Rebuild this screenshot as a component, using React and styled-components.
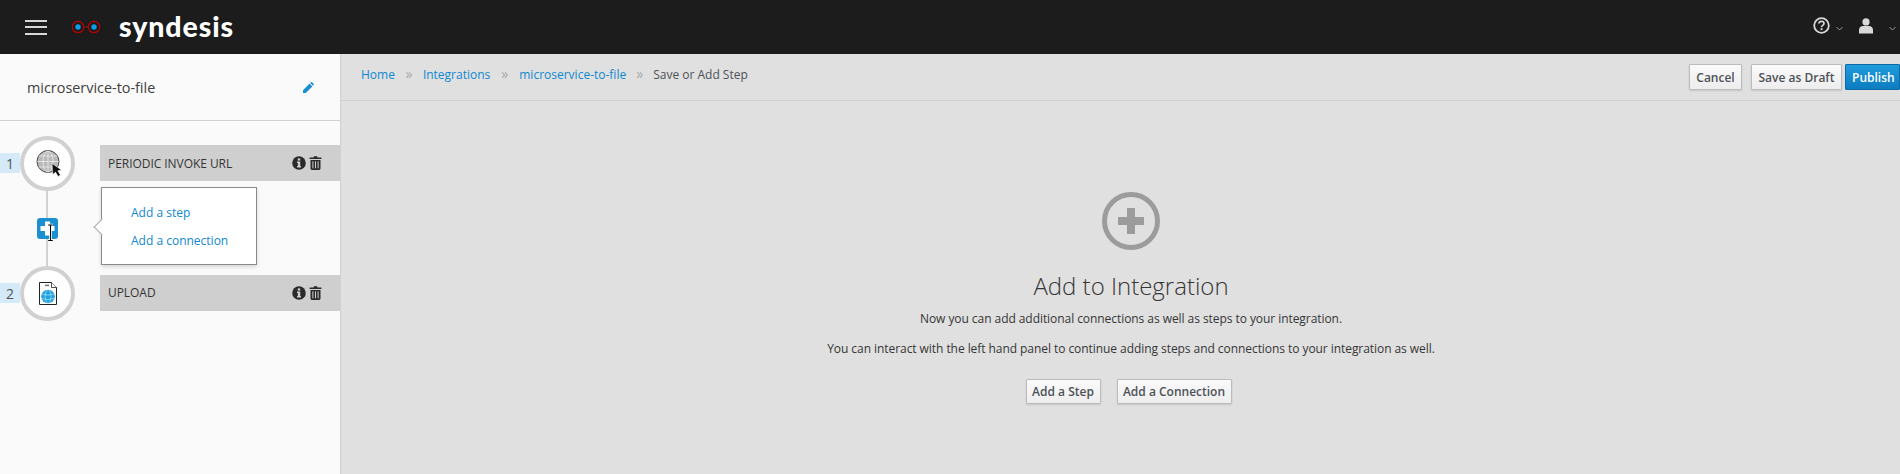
import React from "react";
import styled, { createGlobalStyle } from "styled-components";

const Global = createGlobalStyle`
  html, body { margin: 0; padding: 0; height: 100%; }
  body { font-family: "Open Sans", "Noto Sans", sans-serif; font-size: 12px; color: #363636; overflow: hidden; }
  * { box-sizing: border-box; }
`;
const Page = styled.div`display: flex; flex-direction: column; width: 1900px; height: 474px;`;
const Nav = styled.header`
  height: 54px; flex: none; background: #1c1c1c; display: flex; align-items: center; color: #fff;
`;
const Burger = styled.div`
  width: 22px; margin-left: 25px; display: flex; flex-direction: column; gap: 4.5px;
  span { display: block; height: 2px; background: #d8d8d8; }
`;
const LogoMark = styled.svg`margin-left: 25px; width: 30px; height: 16px; flex: none;`;
const Wordmark = styled.span`
  margin-left: 17px; font-family: "Lato", sans-serif; font-weight: 900; font-size: 28.5px; letter-spacing: 0.9px; line-height: 1; color: #fff; position: relative; top: -1px;
`;
const NavRight = styled.div`margin-left: auto; display: flex; align-items: center;`;
const NavIcon = styled.svg`flex: none; display: block;`;
const Body = styled.div`flex: 1; display: flex; min-height: 0;`;
const Side = styled.aside`
  width: 341px; flex: none; background: #fafafa; border-right: 1px solid #d1d1d1; display: flex; flex-direction: column;
`;
const SideHead = styled.div`
  height: 67px; flex: none; padding: 0 26px 0 27px; border-bottom: 1px solid #d1d1d1; display: flex; align-items: center; justify-content: space-between;
  font-size: 14.4px; color: #404040;
`;
const Steps = styled.div`padding-top: 15px; position: relative;`;
const Step = styled.div`display: flex; align-items: center; height: 54px;`;
const Num = styled.div`
  width: 20px; height: 20px; background: #d4eaf8; font-size: 14px; color: #4d5258; display: flex; align-items: center; justify-content: center; flex: none;
`;
const Circle = styled.div`
  width: 55px; height: 55px; border-radius: 50%; border: 4px solid #d1d1d1; background: #fff; flex: none; display: flex; align-items: center; justify-content: center;
`;
const Bar = styled.div`
  margin-left: 25px; flex: 1; height: 36px; background: #cfcfcf; display: flex; align-items: center; padding: 0 18px 0 8px; color: #363636; font-size: 12px; letter-spacing: -0.05px;
`;
const BarLabel = styled.span`margin-bottom: ${(p) => p.$lift || 0}px;`;
const BarIcons = styled.div`margin-left: auto; display: flex; align-items: center; gap: 3px;`;
const Connector = styled.div`
  width: 55px; height: 76px; margin-left: 20px; display: flex; justify-content: center; align-items: center; position: relative;
  &::before { content: ""; position: absolute; left: 26px; top: 0; bottom: 0; width: 2px; background: #d1d1d1; }
`;
const PlusBtn = styled.div`
  position: relative; width: 21px; height: 21px; border-radius: 3px; background: #1c8fd1;
  svg { display: block; overflow: visible; }
`;
const Popover = styled.div`
  position: absolute; left: 101px; top: 66px; width: 156px; height: 78px; background: #fff; border: 1px solid #8a8a8a; box-shadow: 0 2px 4px rgba(0,0,0,.15);
  display: flex; flex-direction: column; justify-content: center; gap: 11px; padding: 0 0 0 29px;
  &::before {
    content: ""; position: absolute; left: -6px; top: 33px; width: 11px; height: 11px; background: #fff; border-left: 1px solid #a8a8a8; border-bottom: 1px solid #a8a8a8; transform: rotate(45deg);
  }
`;
const Link = styled.a`color: #0f88cf; font-size: 12px; line-height: 17px;`;
const Main = styled.main`flex: 1; background: #e0e0e0; display: flex; flex-direction: column; min-width: 0;`;
const Toolbar = styled.div`
  height: 47px; flex: none; border-bottom: 1px solid #d1d1d1; display: flex; align-items: flex-start; padding: 10px 0 0 20px;
`;
const Crumbs = styled.nav`display: flex; align-items: center; height: 20px; font-size: 12px;`;
const Sep = styled.span`color: #a8a8a8; margin: 0 ${(p) => p.$m}px; font-size: 14px; line-height: 18px;`;
const Current = styled.span`color: #4d5258;`;
const Actions = styled.div`margin-left: auto; display: flex;`;
const Btn = styled.button`
  font-family: inherit; font-size: 12px; height: 26px; padding: 0 6px; border: 1px solid #bbb; border-radius: 1px; color: #4d5258; font-weight: 600;
  background: linear-gradient(#fafafa, #ededed); box-shadow: 0 1px 2px rgba(0,0,0,.12); margin-left: ${(p) => p.$gap || 0}px; width: ${(p) => p.$w}px;
`;
const Publish = styled(Btn)`
  background: linear-gradient(#1f9bdc, #0c7cc0); border-color: #0b6ba8; color: #fff; box-shadow: none;
`;
const Center = styled.div`
  flex: 1; display: flex; flex-direction: column; align-items: center; padding: 91px 0 0 21px;
`;
const PlusCircle = styled.svg`flex: none; display: block;`;
const Title = styled.h2`margin: 19px 0 0; font-weight: 300; font-size: 24px; line-height: 34px; color: #363636;`;
const Para = styled.p`margin: 7px 0 0; font-size: 12px; line-height: 18px; color: #363636; letter-spacing: -0.06px;`;
const Para2 = styled(Para)`margin-top: 12px;`;
const Row = styled.div`display: flex; gap: 16px; margin-top: 21px; margin-left: -5px;`;
const Plain = styled(Btn)`padding: 0; height: 25px;`;

const Info = () => (
  <svg width="14" height="14" viewBox="0 0 14 14" style={{ display: "block" }}>
    <circle cx="7" cy="7" r="6.8" fill="#2b2b2b" />
    <rect x="5.8" y="2.4" width="2.4" height="2.2" fill="#cfcfcf" />
    <path d="M5 5.6h3.2v4.4H9v1.4H5V10h.9V7H5z" fill="#cfcfcf" />
  </svg>
);
const Trash = () => (
  <svg width="13" height="14" viewBox="0 0 13 14" style={{ display: "block" }}>
    <path d="M4.4 1.6 5 .3h3l.6 1.3H12.4v1.5H.6V1.6zM1.5 4h10v8.6c0 .8-.6 1.4-1.3 1.4H2.8c-.7 0-1.3-.6-1.3-1.4z" fill="#2b2b2b" />
    <path d="M3.9 5.3v7M6.5 5.3v7M9.1 5.3v7" stroke="#cfcfcf" strokeWidth="1" />
  </svg>
);
const Pencil = () => (
  <svg width="11" height="11" viewBox="0 0 11 11">
    <path d="M0 11V8.2L6.6 1.6l2.8 2.8L2.8 11zM7.3.9 8 .3c.3-.3.8-.3 1.1 0l1.6 1.6c.3.3.3.8 0 1.1l-.6.7z" fill="#1c8fd1" />
  </svg>
);
const Globe = () => (
  <svg width="30" height="30" viewBox="0 0 30 30" style={{ overflow: "visible" }}>
    <circle cx="15" cy="13.5" r="11" fill="#b8b8b8" stroke="#4a4a4a" strokeWidth="1" />
    <g fill="none" stroke="#ececec" strokeWidth="0.8">
      <ellipse cx="15" cy="13.5" rx="5" ry="10.6" />
      <path d="M15 3v21M4.4 13.5h21.2M6 8h18M6 19h18" />
    </g>
    <path d="M19 15.5l9.4 6.4-3.6.9 2.6 4.2-2.3 1.4-2.6-4.3-2.6 2.5z" fill="#0c0c0c" stroke="#fff" strokeWidth="0.5" />
  </svg>
);
const FileGlobe = () => (
  <svg width="18" height="23" viewBox="0 0 18 23">
    <path d="M.5.5h12l5 5v17H.5z" fill="#fff" stroke="#222" />
    <path d="M12.5.5v5h5" fill="#fff" stroke="#222" strokeWidth="0.8" />
    <rect x="6" y="2.6" width="4.2" height="1.6" fill="#777" />
    <circle cx="9" cy="14.5" r="6.8" fill="#1ba1de" />
    <path d="M3.2 12c3 1.4 8 1.4 11.6 0M2.8 16.5c3.5 1.2 8.8 1.2 12.4-.3M8.4 7.8c-3 4-3 9.6 0 13.4M9.8 7.8c3 4 3 9.6 0 13.4" stroke="#b9e4f6" strokeWidth="0.7" fill="none" />
  </svg>
);

export default function App() {
  return (
    <Page>
      <Global />
      <Nav>
        <Burger><span /><span /><span /></Burger>
        <LogoMark viewBox="0 0 30 16">
          <circle cx="6" cy="8" r="5.7" fill="none" stroke="#b80000" strokeWidth="1.2" />
          <circle cx="22" cy="8" r="5.7" fill="none" stroke="#b80000" strokeWidth="1.2" />
          <path d="M11 8h6" stroke="#b80000" strokeWidth="1.1" />
          <circle cx="6" cy="8" r="2.7" fill="#0a9fe8" />
          <circle cx="22" cy="8" r="2.7" fill="#0a9fe8" />
        </LogoMark>
        <Wordmark>syndesis</Wordmark>
        <NavRight>
          <NavIcon width="17" height="17" viewBox="0 0 17 17" style={{ marginRight: 6, marginTop: -4 }}>
            <circle cx="8.5" cy="8.5" r="7.3" fill="none" stroke="#d8d8d8" strokeWidth="1.8" />
            <path d="M6 6.6c0-3 5-3 5 0 0 1.8-2.5 1.8-2.5 3.6" fill="none" stroke="#d8d8d8" strokeWidth="1.7" />
            <rect x="7.6" y="11.2" width="1.9" height="1.9" fill="#d8d8d8" />
          </NavIcon>
          <NavIcon width="7" height="5" viewBox="0 0 7 5" style={{ marginRight: 16, marginTop: 2 }}>
            <path d="M.5 1l3 3 3-3" fill="none" stroke="#9a9a9a" />
          </NavIcon>
          <NavIcon width="14" height="16" viewBox="0 0 14 16" style={{ marginRight: 16, marginTop: -3 }}>
            <circle cx="7" cy="3.9" r="3.6" fill="#d8d8d8" />
            <path d="M0 15.5V12c0-2.4 2-4 4-4h6c2 0 4 1.6 4 4v3.5z" fill="#d8d8d8" />
          </NavIcon>
          <NavIcon width="7" height="5" viewBox="0 0 7 5" style={{ marginRight: 4, marginTop: 2 }}>
            <path d="M.5 1l3 3 3-3" fill="none" stroke="#9a9a9a" />
          </NavIcon>
        </NavRight>
      </Nav>
      <Body>
        <Side>
          <SideHead>
            microservice-to-file
            <Pencil />
          </SideHead>
          <Steps>
            <Step>
              <Num>1</Num>
              <Circle><Globe /></Circle>
              <Bar>
                <BarLabel>PERIODIC INVOKE URL</BarLabel>
                <BarIcons><Info /><Trash /></BarIcons>
              </Bar>
            </Step>
            <Connector>
              <PlusBtn>
                <svg width="21" height="21" viewBox="0 0 21 21">
                  <path d="M8 3.5h5V8h4.5v5H13v4.5H8V13H3.5V8H8z" fill="#fff" />
                  <path d="M11 7h5M13.5 7v15M11 22.5h5" stroke="#fff" strokeWidth="2.6" fill="none" />
                  <path d="M11.2 7h4.6M13.5 7v15.5M11.2 22.5h4.6" stroke="#000" strokeWidth="1" fill="none" />
                </svg>
              </PlusBtn>
            </Connector>
            <Popover>
              <Link>Add a step</Link>
              <Link>Add a connection</Link>
            </Popover>
            <Step>
              <Num>2</Num>
              <Circle><FileGlobe /></Circle>
              <Bar>
                <BarLabel $lift={2}>UPLOAD</BarLabel>
                <BarIcons><Info /><Trash /></BarIcons>
              </Bar>
            </Step>
          </Steps>
        </Side>
        <Main>
          <Toolbar>
            <Crumbs>
              <Link>Home</Link><Sep $m={10.5}>»</Sep>
              <Link>Integrations</Link><Sep $m={11}>»</Sep>
              <Link>microservice-to-file</Link><Sep $m={10}>»</Sep>
              <Current>Save or Add Step</Current>
            </Crumbs>
            <Actions>
              <Btn $w={53}>Cancel</Btn>
              <Btn $w={91} $gap={9}>Save as Draft</Btn>
              <Publish $w={55} $gap={3}>Publish</Publish>
            </Actions>
          </Toolbar>
          <Center>
            <PlusCircle width="58" height="58" viewBox="0 0 58 58">
              <circle cx="29" cy="29" r="26.5" fill="none" stroke="#9c9c9c" strokeWidth="5" />
              <path d="M25 16h8v9h9v8h-9v9h-8v-9h-9v-8h9z" fill="#9c9c9c" />
            </PlusCircle>
            <Title>Add to Integration</Title>
            <Para>Now you can add additional connections as well as steps to your integration.</Para>
            <Para2>You can interact with the left hand panel to continue adding steps and connections to your integration as well.</Para2>
            <Row>
              <Plain $w={75}>Add a Step</Plain>
              <Plain $w={115}>Add a Connection</Plain>
            </Row>
          </Center>
        </Main>
      </Body>
    </Page>
  );
}
